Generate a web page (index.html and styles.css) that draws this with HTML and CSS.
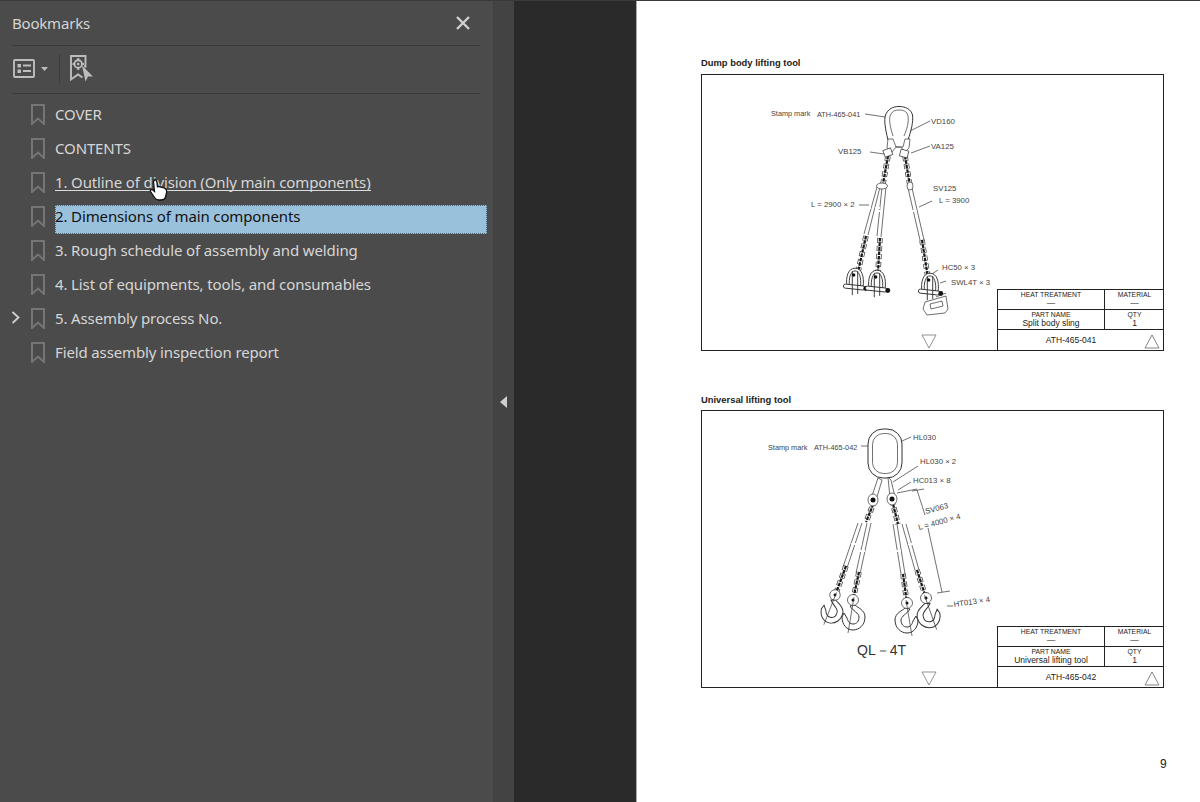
FILE: index.html
```html
<!DOCTYPE html>
<html lang="en">
<head>
<meta charset="utf-8">
<title>Bookmarks</title>
<link rel="stylesheet" href="styles.css">
</head>
<body>
<svg class="defs" width="0" height="0" aria-hidden="true">
  <defs>
    <path id="bm" d="M1 1H13V20L7 14.5L1 20Z"/>
    <g id="shackle">
      <path class="ln" d="M-6 6C-7 -2 -5 -8 0 -8C5 -8 7 -2 6 6"/>
      <path class="ln" d="M-4 6C-5 -1 -3 -6 0 -6C3 -6 5 -1 4 6"/>
      <rect class="ln" x="-8" y="4.500" width="16" height="3" rx="1.500" transform="rotate(6)"/>
      <path class="ln" d="M-2 -6V12M2 -6V11"/>
      <circle class="blk" cx="8" cy="7" r="1.800"/>
      <circle class="blk" cx="-1" cy="-3" r="1.300"/>
    </g>
    <g id="hook">
      <path class="ln2" d="M2 5C5 8 12 10 12 17C12 25 6 30 0 30C-6 30 -11 25 -11 17L-9 13L-6 18C-5 22 -3 24 0 24C4 24 6 21 6 17C6 13 0 11 -3 6Z"/>
      <circle class="ln" cx="0" cy="0" r="5.500"/>
      <circle class="blk" cx="0" cy="0" r="1.500"/>
      <path class="ln" d="M1 -3L-5 33"/>
    </g>
    <g id="chains1">
      <path d="M888 156L883 184"/><path d="M905 156L910 186"/>
      <path d="M866 236L858 272"/><path d="M880 238L878 272"/><path d="M922 240L928 278"/>
    </g>
    <g id="chains2">
      <path d="M875 500L866 522"/><path d="M892 500L898 524"/>
      <path d="M846 566L835 596"/><path d="M859 572L853 600"/><path d="M903 574L907 603"/><path d="M917 570L926 598"/>
    </g>
  </defs>
</svg>
<div class="app">
  <aside class="panel">
    <header class="panel-head">
      <h1 class="panel-title">Bookmarks</h1>
      <svg class="close" width="14" height="14" viewBox="0 0 14 14"><path d="M1 1L13 13M13 1L1 13"/></svg>
    </header>
    <div class="toolbar">
      <button class="tool-options" type="button" aria-label="Options">
        <svg width="22" height="19" viewBox="0 0 22 19"><rect class="ic" x="1" y="1" width="20" height="17" rx="1"/><rect class="icf" x="4.500" y="5" width="3.500" height="3.500"/><rect class="icf" x="4.500" y="10.500" width="3.500" height="3.500"/><path class="ic" d="M10 6.500H18M10 12H18"/></svg>
        <svg width="7" height="4" viewBox="0 0 7 4"><path class="icf" d="M0 0H7L3.500 4Z"/></svg>
      </button>
      <span class="tool-sep"></span>
      <svg class="tool-add" width="24" height="28" viewBox="0 0 24 28"><path class="ic" d="M14 11.500H15.500V1H1V24.500L8 19.500L12.500 22.500"/><circle class="ic" cx="8.200" cy="9" r="3.800"/><circle class="icf" cx="8.200" cy="9" r="1.300"/><path class="ic" d="M8.200 3V5M8.200 13V15M2.500 9H4.400M12 9H14"/><path class="icf" d="M12 10.500L23 21.500H18L15.500 26.500Z"/></svg>
    </div>
    <ul class="tree">
      <li class="row"><svg class="bm" width="14" height="21" viewBox="0 0 14 21"><use href="#bm"/></svg><span class="label">COVER</span></li>
      <li class="row"><svg class="bm" width="14" height="21" viewBox="0 0 14 21"><use href="#bm"/></svg><span class="label">CONTENTS</span></li>
      <li class="row"><svg class="bm" width="14" height="21" viewBox="0 0 14 21"><use href="#bm"/></svg><span class="label link">1. Outline of division (Only main components)</span></li>
      <li class="row"><svg class="bm" width="14" height="21" viewBox="0 0 14 21"><use href="#bm"/></svg><span class="label selected">2. Dimensions of main components</span></li>
      <li class="row"><svg class="bm" width="14" height="21" viewBox="0 0 14 21"><use href="#bm"/></svg><span class="label">3. Rough schedule of assembly and welding</span></li>
      <li class="row"><svg class="bm" width="14" height="21" viewBox="0 0 14 21"><use href="#bm"/></svg><span class="label">4. List of equipments, tools, and consumables</span></li>
      <li class="row"><svg class="twist" width="9" height="13" viewBox="0 0 9 13"><path d="M1.500 1L7.500 6.500L1.500 12"/></svg><svg class="bm" width="14" height="21" viewBox="0 0 14 21"><use href="#bm"/></svg><span class="label">5. Assembly process No.</span></li>
      <li class="row"><svg class="bm" width="14" height="21" viewBox="0 0 14 21"><use href="#bm"/></svg><span class="label">Field assembly inspection report</span></li>
    </ul>
    <svg class="hand" width="20" height="22" viewBox="0 0 20 22"><path d="M5 1.500C6 .5 7.500 1 7.800 2.500L8.500 8L10 7.500L12 8L14 8.500L16 9.500C17.500 10.500 18 12 17.500 14L16.500 18C16 20 14 21 12 21H10C8 21 6.500 20 5.500 18.500L1.500 12.500C1 11.500 2 10 3.500 10.800L5.500 12.500L4.500 3Z"/></svg>
  </aside>
  <div class="splitter"><span class="collapse"></span></div>
  <div class="gutter"></div>
  <main class="page">
    <section class="figure">
      <h2 class="fig-title">Dump body lifting tool</h2>
      <div class="frame">
        <svg class="art" width="463" height="277" viewBox="701 74 463 277">
          <g class="label-text">
            <text class="tight" x="771" y="116">Stamp mark</text><text class="tight" x="817" y="117">ATH-465-041</text>
            <text x="931" y="124">VD160</text><text x="838" y="154">VB125</text><text x="931" y="149">VA125</text>
            <text x="933" y="191">SV125</text><text x="939" y="203">L = 3900</text>
            <text x="811" y="207">L = 2900 × 2</text>
            <text x="942" y="270">HC50 × 3</text><text x="951" y="285">SWL4T × 3</text>
          </g>
          <path class="ln" d="M865 114L885 117M910 131L930 121M870 152L884 154M911 153L930 146M859 205L869 205M919 207L932 201M938 270L932 274M946 281L940 283"/>
          <!-- master link -->
          <path class="ln2" d="M888 140C885 128 884 120 885.500 115C888 109 893 106.500 899 106.500C905 106.500 911 109 912.500 115C913.500 122 911 131 908 140"/>
          <path class="ln" d="M893 136C890 127 889 120 890 116C892 111 895 110 899 110C903 110 907 111 908 116C909 122 907 129 904 136"/>
          <path class="ln" d="M888 139H893L896 147H903L905 139H910L909 148L905 152L901 147H896L892 152L887 148Z"/>
          <!-- slings -->
          <path class="ln" d="M877 187L864 234M880 187L868 235M882 187L877 236M886 187L881 237M908 188L920 240M912 188L924 240"/>
          <path class="gap" d="M866 208L880 208M875 211L888 211M912 211L922 211"/>
          <!-- chains -->
          <use class="ca" href="#chains1"/><use class="cb" href="#chains1"/><use class="cc" href="#chains1"/>
          <rect class="ln" x="884" y="149" width="8" height="7" transform="rotate(-20 888 153)"/>
          <rect class="ln" x="900" y="150" width="8" height="7" transform="rotate(15 904 154)"/>
          <ellipse class="ln" cx="882" cy="186" rx="5.500" ry="3"/>
          <ellipse class="ln" cx="910" cy="186" rx="3" ry="4"/>
          <use href="#shackle" transform="translate(855 279) scale(1.35)"/>
          <use href="#shackle" transform="translate(877 281) scale(1.35)"/>
          <use href="#shackle" transform="translate(930 284) scale(1.35)"/>
          <!-- clamp plate -->
          <path class="ln" d="M925 302L946 296L948 309L945 313L927 315L923 309Z"/>
          <path class="ln" d="M930 304L942 301L943 306L931 309Z"/>
          <path class="ln" d="M936 297L946 293"/>
          <path class="ln tri" d="M922 335H936L929 348Z"/>
        </svg>
        <div class="title-block">
          <div class="tb-cell tb-two"><span class="tb-h">HEAT TREATMENT</span><span class="tb-v">—</span></div>
          <div class="tb-cell tb-two"><span class="tb-h">MATERIAL</span><span class="tb-v">—</span></div>
          <div class="tb-cell tb-two"><span class="tb-h">PART NAME</span><span class="tb-v">Split body sling</span></div>
          <div class="tb-cell tb-two"><span class="tb-h">QTY</span><span class="tb-v">1</span></div>
          <div class="tb-cell tb-wide"><span class="tb-no">ATH-465-041</span><svg class="tb-tri" width="16" height="15" viewBox="0 0 16 15"><path d="M8 1L15 14H1Z"/></svg></div>
        </div>
      </div>
    </section>
    <section class="figure figure-2">
      <h2 class="fig-title">Universal lifting tool</h2>
      <div class="frame frame-2">
        <svg class="art" width="463" height="278" viewBox="701 410 463 278">
          <g class="label-text">
            <text class="tight" x="768" y="450">Stamp mark</text><text class="tight" x="814" y="450">ATH-465-042</text>
            <text x="913" y="440">HL030</text><text x="920" y="464">HL030 × 2</text><text x="913" y="483">HC013 × 8</text>
            <text x="926" y="514" transform="rotate(-15 926 514)">SV063</text>
            <text x="919" y="530" transform="rotate(-15 919 530)">L = 4000 × 4</text>
            <text x="954" y="607" transform="rotate(-8 954 607)">HT013 × 4</text>
          </g>
          <text class="ql" x="857" y="655">QL－4T</text>
          <path class="ln" d="M861 446H868M902 441L911 437M893 482L918 466M898 490L911 482M897 493L917 489"/>
          <path class="ln" d="M917 490L925 515M928 528L942 592M912 491L924 489M937 593L950 591M947 606L953 606"/>
          <!-- master link -->
          <rect class="ln2" x="868" y="429" width="34" height="49" rx="15"/>
          <rect class="ln" x="872.500" y="433.500" width="25" height="40" rx="11"/>
          <path class="ln" d="M878 478L882 480L877 497L872 496ZM888 477L891 480L895 497L890 498Z"/>
          <!-- slings -->
          <path class="ln" d="M858 523L843 567M862 523L847 568M867 523L856 573M871 523L860 574M893 524L901 574M897 524L905 574M902 524L915 570M906 524L919 570"/>
          <path class="gap" d="M848 544L864 544M854 551L872 551M893 551L908 551M902 544L914 544"/>
          <!-- chains -->
          <use class="ca" href="#chains2"/><use class="cb" href="#chains2"/><use class="cc" href="#chains2"/>
          <ellipse class="ln" cx="873" cy="500" rx="5" ry="6"/><ellipse class="ln" cx="892" cy="499" rx="5" ry="6"/>
          <circle class="blk" cx="873" cy="500" r="2.500"/><circle class="blk" cx="892" cy="499" r="2.500"/>
          <use href="#hook" transform="translate(835 595) rotate(12) scale(.95)"/>
          <use href="#hook" transform="translate(853 600)"/>
          <use href="#hook" transform="translate(907 603) scale(-1 1)"/>
          <use href="#hook" transform="translate(926 598) rotate(-10) scale(-1 1)"/>
          <path class="ln tri" d="M922 672H936L929 685Z"/>
        </svg>
        <div class="title-block">
          <div class="tb-cell tb-two"><span class="tb-h">HEAT TREATMENT</span><span class="tb-v">—</span></div>
          <div class="tb-cell tb-two"><span class="tb-h">MATERIAL</span><span class="tb-v">—</span></div>
          <div class="tb-cell tb-two"><span class="tb-h">PART NAME</span><span class="tb-v">Universal lifting tool</span></div>
          <div class="tb-cell tb-two"><span class="tb-h">QTY</span><span class="tb-v">1</span></div>
          <div class="tb-cell tb-wide"><span class="tb-no">ATH-465-042</span><svg class="tb-tri" width="16" height="15" viewBox="0 0 16 15"><path d="M8 1L15 14H1Z"/></svg></div>
        </div>
      </div>
    </section>
    <footer class="page-no">9</footer>
  </main>
</div>
</body>
</html>
```

FILE: styles.css
```css
* { box-sizing: border-box; }
html, body { margin: 0; height: 100%; overflow: hidden; }
body { font-family: "Noto Sans", "Open Sans", sans-serif; background: #2a2a2a; }
.defs { position: absolute; }
.app { display: flex; width: 1200px; height: 802px; border-top: 1px solid #3a3a3a; }
.panel { position: relative; width: 493px; flex: none; background: #4b4b4b; padding: 0 6px 0 12px; }
.panel-head { height: 45px; margin-right: 7px; display: flex; align-items: center; justify-content: space-between; border-bottom: 1px solid #393939; padding-right: 10px; }
.panel-title { margin: 0; font-size: 15px; font-weight: 400; letter-spacing: -.2px; color: #d4d4d4; }
.close path { stroke: #d0d0d0; stroke-width: 2.4; fill: none; }
.toolbar { height: 48px; margin-right: 7px; display: flex; align-items: center; border-bottom: 1px solid #393939; padding: 0 0 2px 1px; }
.tool-options { display: flex; align-items: center; gap: 6px; padding: 0; background: none; border: 0; }
.tool-sep { width: 1px; height: 30px; background: #3c3c3c; margin: 0 10px 0 11px; }
.ic { fill: none; stroke: #bdbdbd; stroke-width: 1.9; }
.icf { fill: #bdbdbd; }
.tree { list-style: none; margin: 3px 0 0; padding: 0 0 0 19px; }
.row { position: relative; height: 34px; display: flex; align-items: center; }
.bm { flex: none; }
.bm use { fill: none; stroke: #757575; stroke-width: 2; }
.twist { position: absolute; left: -20px; top: 10px; }
.twist path { fill: none; stroke: #cfcfcf; stroke-width: 1.8; }
.label { margin-left: 10px; flex: 1; height: 24px; line-height: 24px; font-size: 15px; letter-spacing: -.13px; color: #d6d6d6; white-space: nowrap; }
.link { flex: none; height: 18px; line-height: 18px; border-bottom: 1px solid #dcdcdc; }
.selected { align-self: flex-end; height: 29px; margin-bottom: -1px; background: #9ac1dc; color: #111; line-height: 22px; outline: 1px dotted #4a6478; outline-offset: -1px; }
.hand { position: absolute; left: 149px; top: 178px; }
.hand path { fill: #fff; stroke: #111; stroke-width: 1.3; }
.splitter { width: 21px; flex: none; background: #434343; border-left: 1px solid #414141; display: flex; align-items: center; justify-content: center; }
.collapse { width: 0; height: 0; border: 6px solid transparent; border-left-width: 0; border-right: 7px solid #cfcfcf; margin-right: 2px; }
.gutter { width: 122px; flex: none; background: #2a2a2a; }
.page { flex: 1; background: #fff; border-left: 1px solid #a8a8a8; padding: 55px 36px 0 64px; display: flex; flex-direction: column; position: relative; }
.figure { margin-bottom: 42px; }
.figure-2 { margin-bottom: 0; }
.fig-title { margin: 0 0 5px; font: 700 9.400px/13px "Liberation Sans", Arial, sans-serif; color: #222; }
.figure-2 .fig-title { margin-bottom: 4px; }
.frame { position: relative; width: 463px; height: 277px; border: 1px solid #222; }
.frame-2 { height: 278px; }
.art { display: block; position: absolute; left: -1px; top: -1px; }
.label-text text { font: 7.800px "Liberation Sans", Arial, sans-serif; fill: #444; }
.label-text text.tight { font-size: 7.300px; }
.ql { font: 14px "Liberation Sans", Arial, sans-serif; fill: #333; }
.ln { fill: #fff; stroke: #333; stroke-width: .7; }
.ln2 { fill: #fff; stroke: #333; stroke-width: 1; }
.ln.tri { fill: none; stroke: #666; }
.ca, .cb, .cc { fill: none; }
.ca { stroke: #444; stroke-width: 5.500; stroke-dasharray: 5 3; }
.cb { stroke: #fff; stroke-width: 4; stroke-dasharray: 4 4; stroke-dashoffset: -.5; }
.cc { stroke: #1a1a1a; stroke-width: 2.200; stroke-dasharray: 3.500 1; }
.gap { fill: none; stroke: #fff; stroke-width: 2; stroke-dasharray: 2 1; }
.blk { fill: #111; }
.title-block { position: absolute; right: 0; bottom: 0; width: 166px; display: grid; grid-template-columns: 107px 59px; grid-template-rows: 20px 20px 20px; border-left: 1px solid #222; border-top: 1px solid #222; font-family: "Liberation Sans", Arial, sans-serif; color: #222; }
.tb-cell { border-bottom: 1px solid #222; text-align: center; }
.tb-two { display: flex; flex-direction: column; align-items: center; }
.tb-two:nth-child(2n+1) { border-right: 1px solid #222; }
.tb-h { font-size: 6.800px; line-height: 9px; }
.tb-v { font-size: 8.500px; line-height: 9px; }
.tb-wide { grid-column: 1 / 3; border-bottom: 0; position: relative; display: flex; align-items: center; justify-content: center; padding-right: 20px; }
.tb-no { font-size: 8.500px; }
.tb-tri { position: absolute; right: 4px; bottom: 1px; }
.tb-tri path { fill: none; stroke: #666; stroke-width: .8; }
.page-no { position: absolute; left: 523px; top: 756px; font: 12px "Liberation Sans", Arial, sans-serif; color: #222; }
```
